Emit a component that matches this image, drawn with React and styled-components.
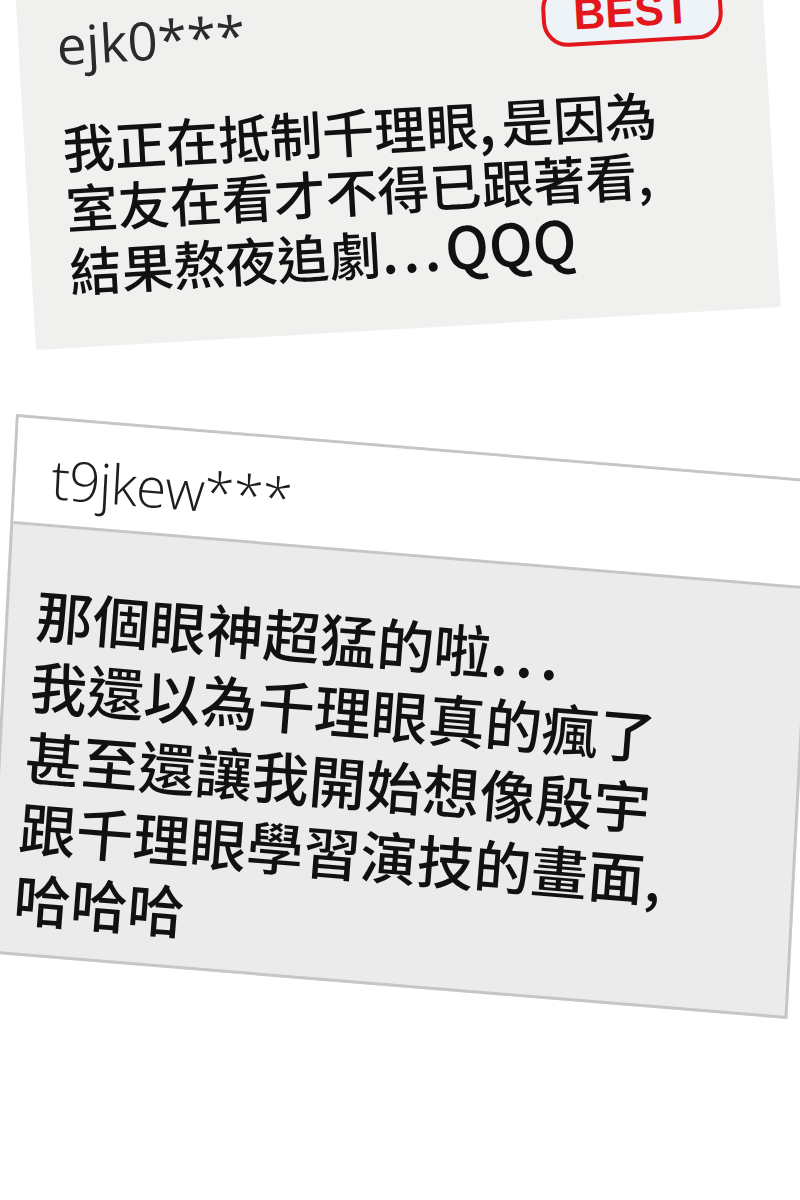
import React from "react";
import styled, { createGlobalStyle } from "styled-components";

const GlobalStyle = createGlobalStyle`
  html, body {
    margin: 0;
    padding: 0;
    background: #ffffff;
    overflow: hidden;
  }
`;

const Page = styled.div`
  width: 800px;
  height: 1200px;
  display: flex;
  flex-direction: column;
  align-items: flex-start;
  overflow: hidden;
  background: #ffffff;
`;

const BestCard = styled.div`
  box-sizing: border-box;
  width: 746px;
  height: 400px;
  margin: -50px 0 0 36px;
  padding: 66px 41px 0 38px;
  background: #f0f1ee;
  transform-origin: bottom left;
  transform: rotate(-3.3deg);
  display: flex;
  flex-direction: column;
`;

const HeaderRow = styled.div`
  display: flex;
  align-items: center;
  justify-content: space-between;
  height: 60px;
`;

const UserName = styled.span`
  font-family: "Open Sans", "Noto Sans", sans-serif;
  font-size: ${(p) => p.size || 52}px;
  font-weight: ${(p) => p.weight || 400};
  letter-spacing: ${(p) => p.spacing || 0}px;
  color: ${(p) => p.color || "#2b2b2b"};
  line-height: 1;
`;

const BestBadge = styled.div`
  box-sizing: border-box;
  width: 181px;
  height: 64px;
  border: 4px solid #e3161e;
  border-radius: 26px;
  background: #eef3f7;
  display: flex;
  align-items: center;
  justify-content: center;
  font-family: "Liberation Sans", Arial, sans-serif;
  font-weight: 700;
  font-size: 44px;
  color: #e3161e;
`;

const Comment = styled.p`
  margin: ${(p) => p.top || 0}px 0 0 0;
  font-family: "Noto Sans CJK TC", "Noto Sans CJK SC", sans-serif;
  font-size: ${(p) => p.size}px;
  font-weight: 500;
  line-height: ${(p) => p.lh}px;
  color: #111111;
  white-space: pre-line;
`;

const Latin = styled.span`
  font-size: 1.12em;
  letter-spacing: ${(p) => p.spacing || 0}px;
`;

const ReplyCard = styled.div`
  box-sizing: border-box;
  width: 802px;
  height: 540px;
  margin: 64px 0 0 16px;
  border: 3px solid #c6c6c6;
  background: #ebebeb;
  transform-origin: top left;
  transform: rotate(3deg) skewY(1.7deg);
  display: flex;
  flex-direction: column;
`;

const ReplyHeader = styled.div`
  box-sizing: border-box;
  height: 107px;
  padding: 10px 0 0 36px;
  background: #ffffff;
  border-bottom: 3px solid #c6c6c6;
  display: flex;
  align-items: center;
`;

const ReplyBody = styled.div`
  padding: 48px 0 0 30px;
  transform-origin: top left;
  transform: skewX(-1.5deg);
`;

export default function App() {
  return (
    <Page>
      <GlobalStyle />
      <BestCard>
        <HeaderRow>
          <UserName size={53}>ejk0***</UserName>
          <BestBadge>BEST</BestBadge>
        </HeaderRow>
        <Comment size={52} lh={60} top={40}>
          我正在抵制千理眼<Latin spacing={6}>,</Latin>是因為
          {"\n"}室友在看才不得已跟著看,
          {"\n"}結果熬夜追劇<Latin spacing={4}>...</Latin>
          <Latin>QQQ</Latin>
        </Comment>
      </BestCard>
      <ReplyCard>
        <ReplyHeader>
          <UserName size={55} weight={300} spacing={-1} color="#1e1e1e">
            t9jkew***
          </UserName>
        </ReplyHeader>
        <ReplyBody>
          <Comment size={57} lh={71}>
            那個眼神超猛的啦<Latin spacing={6}>...</Latin>
            {"\n"}我還以為千理眼真的瘋了
            {"\n"}甚至還讓我開始想像殷宇
            {"\n"}跟千理眼學習演技的畫面,
            {"\n"}哈哈哈
          </Comment>
        </ReplyBody>
      </ReplyCard>
    </Page>
  );
}
